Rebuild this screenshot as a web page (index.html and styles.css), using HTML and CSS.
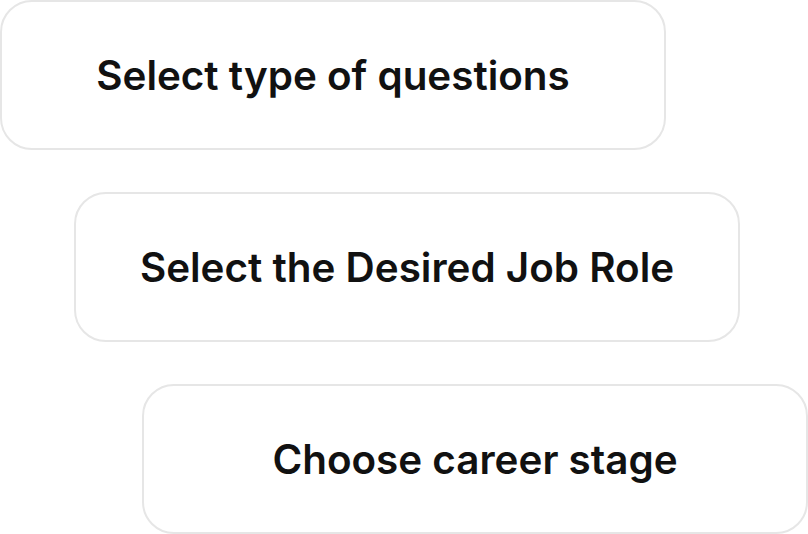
FILE: index.html
```html
<!DOCTYPE html>
<html lang="en">
<head>
    <meta charset="UTF-8">
    <meta name="viewport" content="width=device-width, initial-scale=1.0">
    <title>Interview Setup</title>
    <link rel="stylesheet" href="styles.css">
</head>
<body>
    <!-- Setup steps, staggered -->
    <section class="steps">
        <div class="step step-one">
            <p>Select type of questions</p>
        </div>
        <div class="step step-two">
            <p>Select the Desired Job Role</p>
        </div>
        <div class="step step-three">
            <p>Choose career stage</p>
        </div>
    </section>
</body>
</html>
```

FILE: styles.css
```css
/* General styling */
body {
    margin: 0;
    font-family: Inter, "Noto Sans", sans-serif;
    background-color: #fff;
    color: #111;
}

.steps {
    display: flex;
    flex-direction: column;
    gap: 42px;
}

.step {
    box-sizing: border-box;
    width: 666px;
    height: 150px;
    border: 2px solid #e6e6e6;
    border-radius: 32px;
    background-color: #fff;
    display: flex;
    align-items: center;
    justify-content: center;
}

.step p {
    margin: 0;
    font-size: 40.4px;
    font-weight: 600;
}

.step-two {
    margin-left: 74px;
}

.step-three {
    margin-left: 142px;
}
```
